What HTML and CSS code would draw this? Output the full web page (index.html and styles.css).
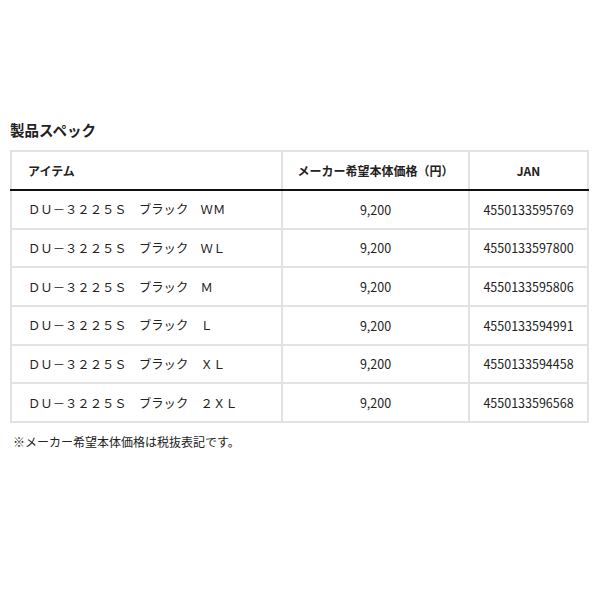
FILE: index.html
```html
<!DOCTYPE html>
<html lang="ja">
<head>
<meta charset="utf-8">
<link rel="stylesheet" href="styles.css">
</head>
<body>
<div class="page">
  <h2 class="title">製品スペック</h2>
  <table class="spec">
    <colgroup>
      <col class="c-item">
      <col class="c-price">
      <col class="c-jan">
    </colgroup>
    <thead>
      <tr>
        <th class="item">アイテム</th>
        <th>メーカー希望本体価格（円）</th>
        <th>JAN</th>
      </tr>
    </thead>
    <tbody>
      <tr><td class="item">ＤＵ－３２２５Ｓ　ブラック　ＷＭ</td><td>9,200</td><td>4550133595769</td></tr>
      <tr><td class="item">ＤＵ－３２２５Ｓ　ブラック　ＷＬ</td><td>9,200</td><td>4550133597800</td></tr>
      <tr><td class="item">ＤＵ－３２２５Ｓ　ブラック　Ｍ</td><td>9,200</td><td>4550133595806</td></tr>
      <tr><td class="item">ＤＵ－３２２５Ｓ　ブラック　Ｌ</td><td>9,200</td><td>4550133594991</td></tr>
      <tr><td class="item">ＤＵ－３２２５Ｓ　ブラック　ＸＬ</td><td>9,200</td><td>4550133594458</td></tr>
      <tr><td class="item">ＤＵ－３２２５Ｓ　ブラック　２ＸＬ</td><td>9,200</td><td>4550133596568</td></tr>
    </tbody>
  </table>
  <p class="note">※メーカー希望本体価格は税抜表記です。</p>
</div>
</body>
</html>
```

FILE: styles.css
```css
html, body {
  margin: 0;
  padding: 0;
  background: #fff;
}
body {
  font-family: "Noto Sans CJK JP", "Noto Sans", sans-serif;
  color: #222;
}
.page {
  padding: 119px 13px 0 10px;
}
.title {
  margin: 0 0 9px 0;
  font-size: 14.5px;
  line-height: 22px;
  font-weight: 700;
  color: #222;
}
.spec {
  width: 577px;
  border-collapse: collapse;
  table-layout: fixed;
  border: 2px solid #e2e2e2;
}
.c-item { width: 271px; }
.c-price { width: 187px; }
.c-jan { width: 119px; }
.spec th,
.spec td {
  border: 2px solid #e2e2e2;
  text-align: center;
  padding: 0;
  font-size: 12.5px;
  color: #222;
}
.spec th {
  height: 37px;
  font-size: 12px;
  font-weight: 700;
  border-bottom: 2px solid #111;
}
.spec td {
  height: 36.67px;
}
.spec .item {
  text-align: left;
  padding-left: 16px;
}
.spec td.item {
  font-size: 12.33px;
  padding-left: 16px;
}
.note {
  margin: 10px 0 0 3px;
  font-size: 12px;
  line-height: 18px;
  color: #222;
}
```
